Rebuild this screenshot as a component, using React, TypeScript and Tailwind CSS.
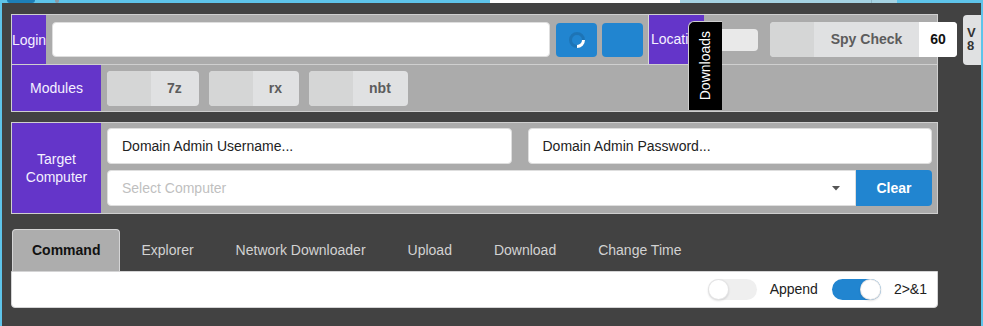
import React from "react";

const Label = ({ children, w }: { children: React.ReactNode; w: string }) => (
  <div className={`${w} shrink-0 self-stretch bg-[#6435c9] text-[#f4f0ff] flex items-center justify-center text-center leading-[18px] whitespace-nowrap`}>
    {children}
  </div>
);

const LabeledBtn = ({ text }: { text: string }) => (
  <div className="shrink-0 h-[35px] flex rounded-[4px] overflow-hidden bg-[#e0e1e2]">
    <div className="w-[44px] bg-[#d5d6d6]" />
    <div className="pl-[16px] pr-[17px] flex items-center font-bold text-[#5c5c5c]">{text}</div>
  </div>
);

const Toggle = ({ on }: { on: boolean }) => (
  <div className={`relative w-[49px] h-[21px] rounded-full ${on ? "bg-[#2185d0]" : "bg-[#efefef]"}`}>
    <div
      className={`absolute top-0 ${on ? "right-0" : "left-0"} w-[21px] h-[21px] rounded-full bg-white shadow-[0_1px_2px_rgba(34,36,38,0.15),0_0_0_1px_rgba(34,36,38,0.12)_inset]`}
    />
  </div>
);

export default function App() {
  const tabs = ["Explorer", "Network Downloader", "Upload", "Download", "Change Time"];
  return (
    <div className="relative w-[983px] h-[326px] flex flex-col overflow-hidden font-['Liberation_Sans',Arial,sans-serif] text-[14px]">
      {/* top strip */}
      <div className="h-[3px] shrink-0 flex bg-[#5ec4ea]">
        <div className="w-[7px]" />
        <div className="w-[28px] bg-[#1d7fb8] rounded-b-full" />
        <div className="w-[20px]" />
        <div className="w-[4px] bg-[#8a9aa5] rounded-b" />
        <div className="w-[431px]" />
        <div className="w-[190px] bg-white" />
        <div className="w-[191px] bg-[#a6d3e3]" />
        <div className="w-[1px] bg-[#8fb8c8]" />
        <div className="w-[25px] bg-[#a6d3e3]" />
      </div>

      <div className="flex-1 flex flex-col bg-[#424242] border-x-2 border-[#5ec4ea] pl-[9px] pt-[11px] overflow-hidden">
        {/* Panel 1 */}
        <div className="w-[927px] shrink-0 bg-[#ababab] border border-[#cfcfcf] flex flex-col">
          <div className="h-[50px] flex items-center border-b border-[#cfcfcf]">
            <Label w="w-[34px]">Login</Label>
            <div className="ml-[6px] w-[498px] h-[35px] shrink-0 bg-white rounded-[4px] border border-[#dedede]" />
            <div className="ml-[6px] w-[41px] h-[34px] shrink-0 bg-[#2185d0] rounded-[4px] flex items-center justify-center">
              <svg width="18" height="18" viewBox="0 0 18 18">
                <circle cx="9" cy="9" r="6.5" fill="none" stroke="rgba(0,0,0,0.12)" strokeWidth="3" />
                <path d="M15.5 9 A6.5 6.5 0 0 1 9 15.5" fill="none" stroke="#ffffff" strokeWidth="3" />
              </svg>
            </div>
            <div className="ml-[5px] w-[41px] h-[34px] shrink-0 bg-[#2185d0] rounded-[4px]" />
            <div className="ml-[5px] w-[56px] shrink-0 self-stretch bg-[#6435c9] text-[#f4f0ff] flex items-center pl-[2px] whitespace-nowrap overflow-hidden border-l border-[#d8d8d8]">
              Location
            </div>
            <div className="w-[54px] h-[22px] shrink-0 bg-[#e9e9e9] rounded-r-[4px]" />
            <div className="ml-[12px] h-[35px] shrink-0 flex rounded-[4px] overflow-hidden bg-[#e0e1e2]">
              <div className="w-[44px] bg-[#d5d6d6]" />
              <div className="w-[105px] flex items-center justify-center font-bold text-[#5c5c5c]">Spy Check</div>
              <div className="w-[38px] bg-white flex items-center justify-center font-bold text-[#111]">60</div>
            </div>
            <div className="ml-[6px] w-[40px] h-[50px] shrink-0 bg-[#e0e1e2] rounded-[4px] flex flex-col justify-center gap-[1px] pl-[4px] text-[13px] leading-[12px] font-bold text-[#333]">
              <span className="block">V</span>
              <span className="block">8</span>
            </div>
          </div>
          <div className="h-[46px] flex items-center">
            <Label w="w-[89px]">Modules</Label>
            <div className="ml-[6px] flex gap-[10px]">
              <LabeledBtn text="7z" />
              <LabeledBtn text="rx" />
              <LabeledBtn text="nbt" />
            </div>
          </div>
        </div>

        {/* Panel 2 */}
        <div className="mt-[10px] w-[927px] shrink-0 bg-[#ababab] border border-[#cfcfcf] flex">
          <Label w="w-[89px]">
            Target
            <br />
            Computer
          </Label>
          <div className="flex-1 flex flex-col pl-[6px] pr-[5px] pt-[5px] pb-[7px] gap-[6px]">
            <div className="flex gap-[16px]">
              <div className="flex-1 h-[36px] bg-white rounded-[4px] border border-[#dedede] flex items-center pl-[14px] text-[#222]">
                Domain Admin Username...
              </div>
              <div className="flex-1 h-[36px] bg-white rounded-[4px] border border-[#dedede] flex items-center pl-[14px] text-[#222]">
                Domain Admin Password...
              </div>
            </div>
            <div className="flex h-[36px]">
              <div className="flex-1 bg-white rounded-l-[4px] border border-[#dedede] flex items-center pl-[14px] pr-[15px] text-[#bfbfbf]">
                <span className="flex-1">Select Computer</span>
                <svg width="8" height="5" viewBox="0 0 8 5">
                  <path d="M0 0 L8 0 L4 4.5 Z" fill="#555" />
                </svg>
              </div>
              <div className="w-[76px] bg-[#2185d0] rounded-r-[4px] flex items-center justify-center font-bold text-white">
                Clear
              </div>
            </div>
          </div>
        </div>

        {/* Tabs */}
        <div className="mt-[15px] ml-[1px] flex h-[42px] shrink-0">
          <div className="px-[19px] bg-[#adadad] rounded-t-[4px] border border-b-0 border-[#d4d4d5] flex items-center font-bold text-[#111]">
            Command
          </div>
          {tabs.map((t) => (
            <div key={t} className="px-[21px] flex items-center text-[#d2d2d2]">
              {t}
            </div>
          ))}
        </div>
        <div className="w-[927px] h-[37px] shrink-0 bg-white border border-[#d4d4d5] rounded-b-[4px] flex items-center justify-end pr-[10px] text-[#212121]">
          <Toggle on={false} />
          <span className="ml-[13px]">Append</span>
          <div className="ml-[14px]">
            <Toggle on={true} />
          </div>
          <span className="ml-[13px]">2&gt;&amp;1</span>
        </div>
      </div>

      {/* Downloads side tab */}
      <div className="absolute left-[688px] top-[21px] w-[34px] h-[89px] bg-black rounded-tl-[6px] border-l border-t border-[#cfcfcf] flex items-center justify-center">
        <span className="[writing-mode:vertical-rl] rotate-180 text-white whitespace-nowrap">Downloads</span>
      </div>
    </div>
  );
}
